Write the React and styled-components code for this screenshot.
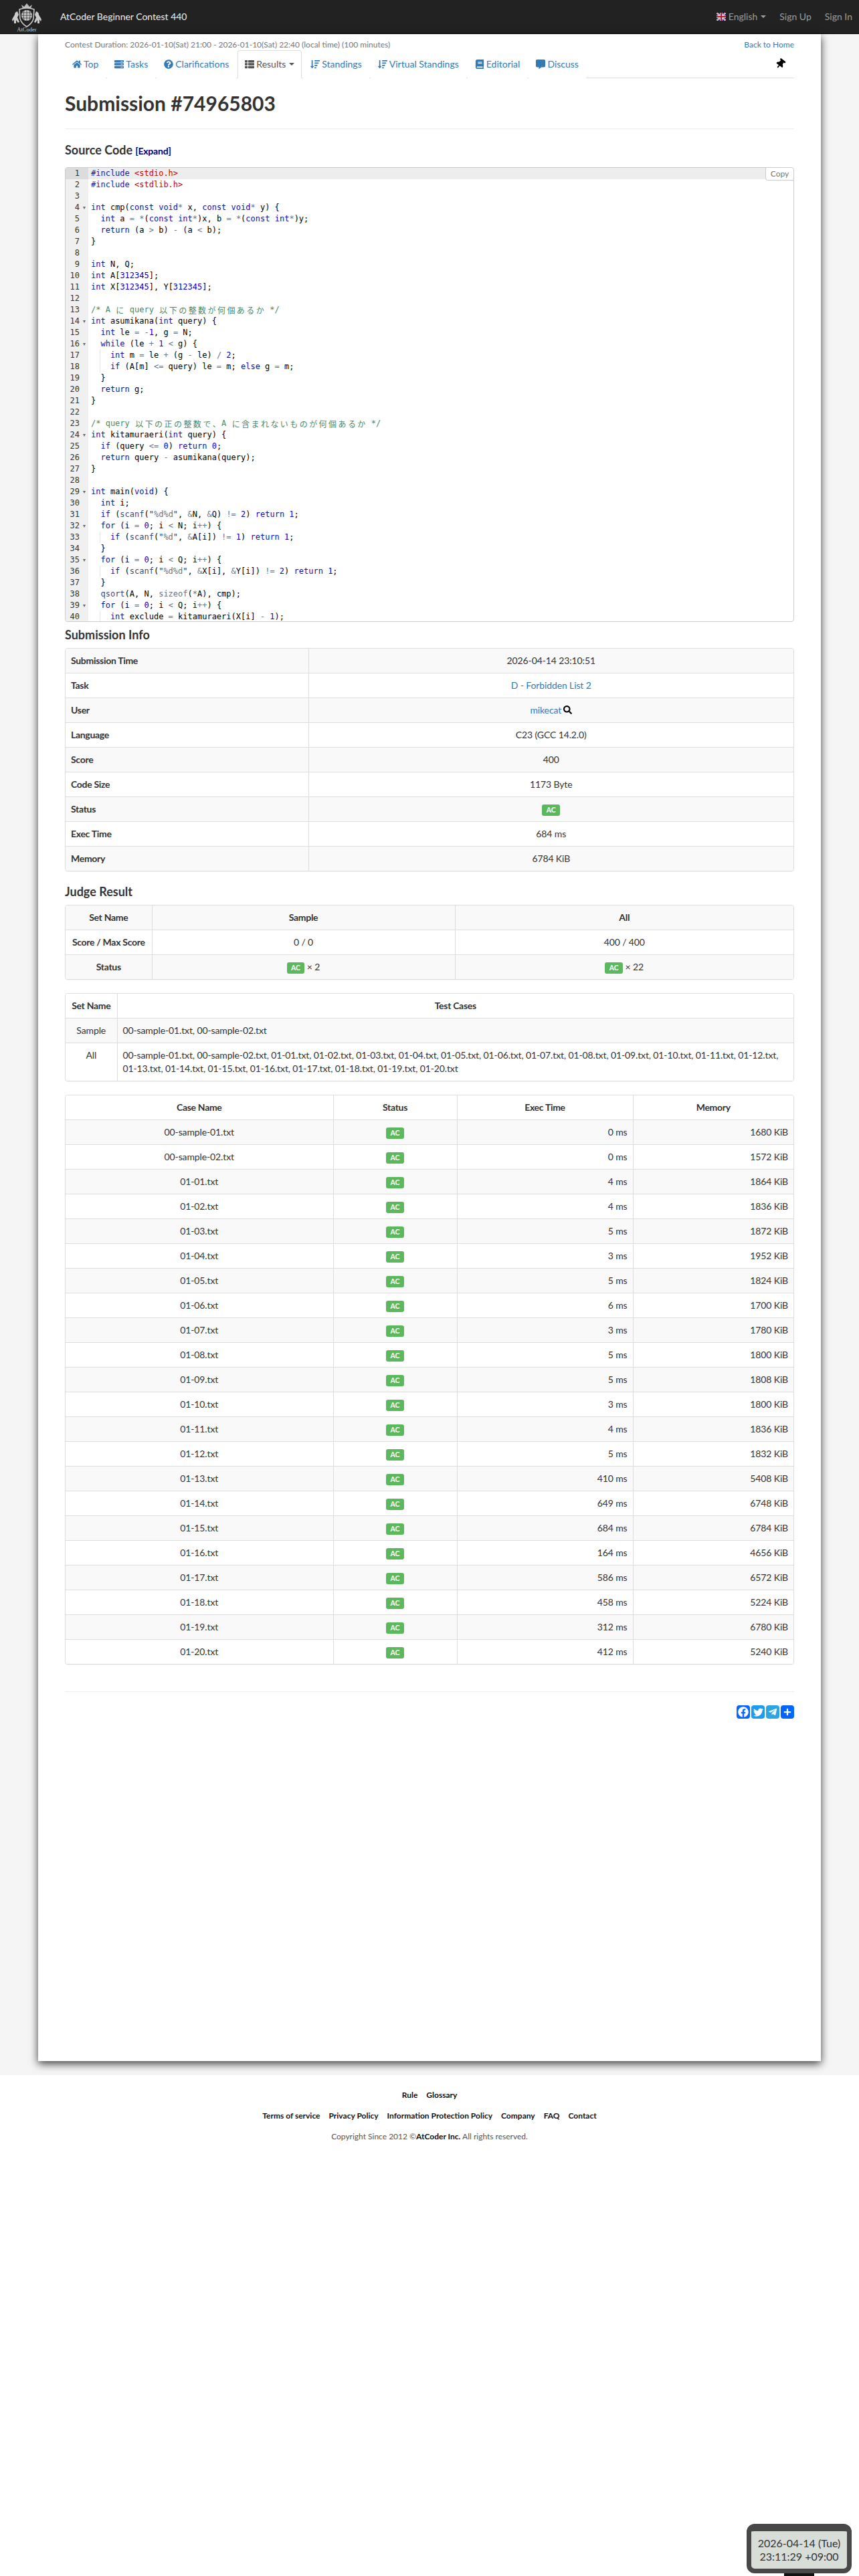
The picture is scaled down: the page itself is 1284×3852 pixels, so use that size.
import React from 'react';
import styled, { createGlobalStyle } from 'styled-components';
import {
    FaHome, FaServer, FaQuestionCircle, FaThList, FaSortAmountDown, FaBook, FaCommentAlt,
    FaThumbtack, FaSearch, FaFacebook, FaTwitter, FaTelegramPlane, FaPlus,
} from 'react-icons/fa';

const GlobalStyle = createGlobalStyle`
    html, body {
        margin: 0;
        padding: 0;
        background: #fff;
    }
    body {
        font-family: Lato, "Liberation Sans", sans-serif;
        font-size: 14px;
        line-height: 20px;
        color: #333;
    }
`;

const Page = styled.div`
    width: 1284px;
    height: 3852px;
    overflow: hidden;
`;

/* ---------- navbar ---------- */
const Navbar = styled.nav`
    height: 50px;
    background: #222;
    border-bottom: 1px solid #080808;
    display: flex;
    align-items: center;
    padding: 0 10px 0 15px;
`;
const Brand = styled.div`
    display: flex;
    align-items: center;
    color: #eee;
    gap: 25px;
    flex: 1;
`;
const NavLinks = styled.div`
    display: flex;
    align-items: center;
    color: #9d9d9d;
`;
const NavLink = styled.span`
    margin-left: ${p => p.$gap}px;
    display: flex;
    align-items: center;
`;
const Caret = styled.i`
    display: inline-block;
    width: 0;
    height: 0;
    margin-left: ${p => p.$gap || 2}px;
    border-top: 4px solid currentColor;
    border-left: 4px solid transparent;
    border-right: 4px solid transparent;
`;
const Flag = styled.svg`
    width: 14px;
    height: 12px;
    margin-right: 4px;
`;

/* ---------- main container ---------- */
const Wrap = styled.div`
    background: #f5f5f5;
    padding-bottom: 21px;
`;
const Main = styled.main`
    box-sizing: border-box;
    width: 1170px;
    height: 3031px;
    margin-left: 57px;
    padding: 7px 40px 0;
    background: #fff;
    box-shadow: 0 4px 12px rgba(0, 0, 0, .75);
`;
const TopRow = styled.div`
    display: flex;
    justify-content: space-between;
    font-size: 12px;
    line-height: 17px;
    color: #777;
`;
const Link = styled.a`
    color: #337ab7;
    text-decoration: none;
`;
const Tabs = styled.ul`
    box-sizing: border-box;
    display: flex;
    align-items: flex-start;
    list-style: none;
    margin: 0;
    padding: 0;
    height: 42px;
    border-bottom: 1px solid #ddd;
`;
const Tab = styled.li`
    box-sizing: border-box;
    height: 42px;
    margin-right: 2px;
    padding: 10px;
    display: flex;
    align-items: center;
    gap: 3px;
    color: ${p => (p.$active ? '#555' : '#337ab7')};
    background: #fff;
    border: 1px solid ${p => (p.$active ? '#ddd' : 'transparent')};
    border-bottom-color: ${p => (p.$active ? '#fff' : 'transparent')};
    border-radius: 4px 4px 0 0;
    svg {
        font-size: 14px;
    }
`;
const PinTab = styled.li`
    margin: 13px 13px 0 auto;
    color: #000;
    font-size: 15px;
    line-height: 15px;
    svg {
        transform: rotate(38deg);
    }
`;
const Title = styled.h2`
    margin: 21px 0;
    font-size: 30px;
    line-height: 33px;
    font-weight: 700;
`;
const Rule = styled.hr`
    margin: ${p => p.$top || 0}px 0 0;
    border: 0;
    border-top: 1px solid #eee;
`;
const Heading = styled.h3`
    margin: ${p => p.$top}px 0 10px;
    font-size: 18px;
    line-height: 20px;
    font-weight: 700;
`;
const Expand = styled.a`
    margin-left: 4px;
    font-size: 14px;
    letter-spacing: -.2px;
    color: #000080;
`;

/* ---------- editor ---------- */
const Editor = styled.div`
    position: relative;
    box-sizing: border-box;
    height: 680px;
    margin-top: 14px;
    display: flex;
    overflow: hidden;
    border: 1px solid #ccc;
    border-radius: 4px;
    font-family: "DejaVu Sans Mono", "Liberation Mono", monospace;
    font-size: 12px;
    line-height: 17px;
`;
const CopyButton = styled.span`
    position: absolute;
    top: -1px;
    right: -1px;
    width: 41px;
    height: 18px;
    text-align: center;
    background: #fff;
    border: 1px solid #ccc;
    border-radius: 0 4px 0 4px;
    font-family: Lato, sans-serif;
    font-size: 12px;
    line-height: 18px;
    color: #777;
`;
const Gutter = styled.div`
    width: 34px;
    flex: none;
    background: #f0f0f0;
    color: #333;
`;
const GutterCell = styled.div`
    position: relative;
    height: 17px;
    box-sizing: border-box;
    padding-right: 13px;
    text-align: right;
    background: ${p => (p.$active ? '#dcdcdc' : 'transparent')};
`;
const Fold = styled.i`
    position: absolute;
    right: 4px;
    top: 7px;
    width: 0;
    height: 0;
    border-top: 4px solid #666;
    border-left: 2.5px solid transparent;
    border-right: 2.5px solid transparent;
`;
const CodeArea = styled.div`
    flex: 1;
    min-width: 0;
`;
const CodeLine = styled.div`
    height: 17px;
    padding-left: 4px;
    white-space: pre;
    color: #000;
    background: ${p => (p.$active ? 'rgba(0, 0, 0, .07)' : 'transparent')};
`;
const Guide = styled.span`
    display: inline-block;
    width: 14.45px;
    height: 17px;
    vertical-align: top;
    box-shadow: ${p => (p.$line ? 'inset -1px 0 0 #e4e4e4' : 'none')};
`;
const tokenColors = {
    kw: '#1010b0',
    num: '#0000cd',
    op: '#687687',
    str: '#1a1aa6',
    fn: '#3c4c72',
    inc: '#c5060b',
    com: '#4c886b',
    fmt: '#687687',
};
const Tok = styled.span`
    color: ${p => tokenColors[p.$kind]};
`;
const Wide = styled.span`
    display: inline-block;
    width: 14.45px;
    text-align: center;
    font-family: "Noto Sans CJK JP", sans-serif;
    line-height: 17px;
    vertical-align: top;
`;

/* ---------- tables ---------- */
const Panel = styled.div`
    margin-top: ${p => p.$top || 0}px;
    border: 1px solid #ddd;
    border-radius: 4px;
    box-shadow: 0 1px 1px rgba(0, 0, 0, .05);
    overflow: hidden;
`;
const Table = styled.table`
    width: 100%;
    table-layout: fixed;
    border-collapse: collapse;
    tbody tr:nth-child(odd) {
        background: ${p => (p.$evenStripe ? '#fff' : '#f9f9f9')};
    }
    tbody tr:nth-child(even) {
        background: ${p => (p.$evenStripe ? '#f9f9f9' : '#fff')};
    }
`;
const Cell = styled.td`
    padding: 8px;
    border: 1px solid #ddd;
    line-height: 20px;
    letter-spacing: ${p => (p.$head ? '-.3px' : '-.12px')};
    white-space: ${p => (p.$head ? 'nowrap' : 'normal')};
    text-align: ${p => p.$align || 'center'};
    font-weight: ${p => (p.$head ? 700 : 400)};
    vertical-align: top;
    tr:first-child > & {
        border-top: 0;
    }
    tr:last-child > & {
        border-bottom: 0;
    }
    &:first-child {
        border-left: 0;
    }
    &:last-child {
        border-right: 0;
    }
`;
const CaseName = styled.span`
    white-space: nowrap;
`;
const Badge = styled.span`
    padding: .2em .6em .3em;
    background: #5cb85c;
    border-radius: 3px;
    color: #fff;
    font-size: 10.5px;
    line-height: 1;
    font-weight: 700;
    letter-spacing: 0;
`;
const SearchIcon = styled(FaSearch)`
    color: #000;
    font-size: 13px;
    margin-left: 3px;
    vertical-align: -1px;
`;

/* ---------- share / footer ---------- */
const ShareRow = styled.div`
    display: flex;
    justify-content: flex-end;
    gap: 2px;
    margin-top: 20px;
`;
const ShareButton = styled.span`
    width: 20px;
    height: 20px;
    border-radius: 4px;
    background: ${p => p.$color};
    color: #fff;
    display: flex;
    align-items: center;
    justify-content: center;
    font-size: ${p => p.$size || 14}px;
`;
const Footer = styled.footer`
    padding-top: 21px;
    background: #fff;
    text-align: center;
    font-size: 12px;
    line-height: 17px;
`;
const FooterRow = styled.div`
    display: flex;
    justify-content: center;
    gap: 13px;
    margin-bottom: 14px;
    font-weight: 700;
    color: #111;
`;
const Copyright = styled.div`
    color: #555;
    b {
        color: #111;
    }
`;

/* ---------- clock ---------- */
const Clock = styled.div`
    position: fixed;
    left: 1116px;
    top: 3774px;
    box-sizing: border-box;
    width: 157px;
    height: 74px;
    padding: 8px 0 0;
    background: #d8ddd8;
    border: 7px solid #484848;
    border-top-width: 11px;
    border-radius: 12px;
    text-align: center;
    font-size: 16px;
    line-height: 20px;
    color: #333;
`;
const ClockStand = styled.div`
    position: fixed;
    left: 1172px;
    top: 3848px;
    width: 45px;
    height: 4px;
    background: #111;
`;

const codeLines = [
    '#include <stdio.h>',
    '#include <stdlib.h>',
    '',
    'int cmp(const void* x, const void* y) {',
    '  int a = *(const int*)x, b = *(const int*)y;',
    '  return (a > b) - (a < b);',
    '}',
    '',
    'int N, Q;',
    'int A[312345];',
    'int X[312345], Y[312345];',
    '',
    '/* A に query 以下の整数が何個あるか */',
    'int asumikana(int query) {',
    '  int le = -1, g = N;',
    '  while (le + 1 < g) {',
    '    int m = le + (g - le) / 2;',
    '    if (A[m] <= query) le = m; else g = m;',
    '  }',
    '  return g;',
    '}',
    '',
    '/* query 以下の正の整数で、A に含まれないものが何個あるか */',
    'int kitamuraeri(int query) {',
    '  if (query <= 0) return 0;',
    '  return query - asumikana(query);',
    '}',
    '',
    'int main(void) {',
    '  int i;',
    '  if (scanf("%d%d", &N, &Q) != 2) return 1;',
    '  for (i = 0; i < N; i++) {',
    '    if (scanf("%d", &A[i]) != 1) return 1;',
    '  }',
    '  for (i = 0; i < Q; i++) {',
    '    if (scanf("%d%d", &X[i], &Y[i]) != 2) return 1;',
    '  }',
    '  qsort(A, N, sizeof(*A), cmp);',
    '  for (i = 0; i < Q; i++) {',
    '    int exclude = kitamuraeri(X[i] - 1);',
];
const foldLines = [4, 14, 16, 24, 29, 32, 35, 39];

const wideSplit = text => text.split(/([\u3000-\u9fff])/).map((part, i) => (
    i % 2 ? <Wide key={i}>{part}</Wide> : part
));

// 아주 단순한 C 구문 강조
const highlight = line => {
    if (line.startsWith('/*')) return <Tok $kind="com">{wideSplit(line)}</Tok>;
    if (line.startsWith('#include')) {
        const [kw, inc] = line.split(' ');
        return <><Tok $kind="str">{kw}</Tok> <Tok $kind="inc">{inc}</Tok></>;
    }
    const pattern = /("[^"]*")|\b(int|void|const|return|if|else|while|for)\b|\b(scanf|qsort)\b|\b(sizeof)\b|\b(\d+)\b|([-+*/<>=!&]+)/g;
    const out = [];
    let last = 0;
    let m;
    while ((m = pattern.exec(line))) {
        if (m.index > last) out.push(line.slice(last, m.index));
        const key = m.index;
        if (m[1]) {
            out.push(<Tok key={key} $kind="str">"<Tok $kind="fmt">{m[1].slice(1, -1)}</Tok>"</Tok>);
        } else if (m[2]) {
            out.push(<Tok key={key} $kind="kw">{m[2]}</Tok>);
        } else if (m[3]) {
            out.push(<Tok key={key} $kind="fn">{m[3]}</Tok>);
        } else if (m[4]) {
            out.push(<Tok key={key} $kind="op">{m[4]}</Tok>);
        } else if (m[5]) {
            out.push(<Tok key={key} $kind="num">{m[5]}</Tok>);
        } else {
            out.push(<Tok key={key} $kind="op">{m[6]}</Tok>);
        }
        last = m.index + m[0].length;
    }
    if (last < line.length) out.push(line.slice(last));
    return out;
};

const renderLine = line => {
    const deep = line.startsWith('    ');
    const body = deep ? line.slice(4) : line;
    return (
        <>
            {deep && <><Guide $line /><Guide /></>}
            {highlight(body)}
        </>
    );
};

const infoRows = [
    ['Submission Time', '2026-04-14 23:10:51'],
    ['Task', <Link key="t">D - Forbidden List 2</Link>],
    ['User', <span key="u"><Link>mikecat</Link><SearchIcon /></span>],
    ['Language', 'C23 (GCC 14.2.0)'],
    ['Score', '400'],
    ['Code Size', '1173 Byte'],
    ['Status', <Badge key="b">AC</Badge>],
    ['Exec Time', '684 ms'],
    ['Memory', '6784 KiB'],
];

const cases = [
    ['00-sample-01.txt', 0, 1680], ['00-sample-02.txt', 0, 1572],
    ['01-01.txt', 4, 1864], ['01-02.txt', 4, 1836], ['01-03.txt', 5, 1872], ['01-04.txt', 3, 1952],
    ['01-05.txt', 5, 1824], ['01-06.txt', 6, 1700], ['01-07.txt', 3, 1780], ['01-08.txt', 5, 1800],
    ['01-09.txt', 5, 1808], ['01-10.txt', 3, 1800], ['01-11.txt', 4, 1836], ['01-12.txt', 5, 1832],
    ['01-13.txt', 410, 5408], ['01-14.txt', 649, 6748], ['01-15.txt', 684, 6784], ['01-16.txt', 164, 4656],
    ['01-17.txt', 586, 6572], ['01-18.txt', 458, 5224], ['01-19.txt', 312, 6780], ['01-20.txt', 412, 5240],
];

const CaseList = ({ items }) => items.map((v, i) => (
    <React.Fragment key={v[0]}>
        <CaseName>{v[0]}{i < items.length - 1 ? ',' : ''}</CaseName>{' '}
    </React.Fragment>
));

const Logo = () => (
    <svg width="50" height="46" viewBox="0 0 50 46">
        {/* crown */}
        <path d="M19 11 L17 5 L21 8 L25 3 L29 8 L33 5 L31 11 Z" fill="#bbb" />
        {/* shield */}
        <path d="M14 12 Q25 8 36 12 L35 26 Q33 33 25 38 Q17 33 15 26 Z" fill="#222" stroke="#ccc" strokeWidth="1.5" />
        {/* globe */}
        <circle cx="25" cy="21" r="8" fill="#ccc" />
        <path d="M17 21H33M18 17H32M18 25H32M25 13V29M21 14Q19 21 21 28M29 14Q31 21 29 28" stroke="#222" strokeWidth=".7" fill="none" />
        {/* horses */}
        <path d="M11 15 Q7 16 7 20 L3 27 L4 30 L6 27 L6 33 L9 33 L9 28 L12 32 L14 31 L11 24 L13 20 Z" fill="#ccc" />
        <path d="M39 15 Q43 16 43 20 L47 27 L46 30 L44 27 L44 33 L41 33 L41 28 L38 32 L36 31 L39 24 L37 20 Z" fill="#ccc" />
        <text x="25" y="45" textAnchor="middle" fontFamily="'Liberation Serif', serif" fontSize="8.5" fill="#ccc">AtCoder</text>
    </svg>
);

const App = () => {
    return (
        <Page>
            <GlobalStyle />
            <Navbar>
                <Brand>
                    <Logo />
                    <span>AtCoder Beginner Contest 440</span>
                </Brand>
                <NavLinks>
                    <NavLink $gap={0}>
                        <Flag viewBox="0 0 14 12">
                            <rect width="14" height="12" fill="#012169" />
                            <path d="M0 0L14 12M14 0L0 12" stroke="#fff" strokeWidth="2.4" />
                            <path d="M0 0L14 12M14 0L0 12" stroke="#c8102e" strokeWidth=".8" />
                            <path d="M7 0V12M0 6H14" stroke="#fff" strokeWidth="3.6" />
                            <path d="M7 0V12M0 6H14" stroke="#c8102e" strokeWidth="2" />
                        </Flag>
                        English<Caret $gap={5} />
                    </NavLink>
                    <NavLink $gap={20}>Sign Up</NavLink>
                    <NavLink $gap={20}>Sign In</NavLink>
                </NavLinks>
            </Navbar>
            <Wrap>
                <Main>
                    <TopRow>
                        <span>Contest Duration: 2026-01-10(Sat) 21:00 - 2026-01-10(Sat) 22:40 (local time) (100 minutes)</span>
                        <Link>Back to Home</Link>
                    </TopRow>
                    <Tabs>
                        <Tab><FaHome />Top</Tab>
                        <Tab><FaServer />Tasks</Tab>
                        <Tab><FaQuestionCircle />Clarifications</Tab>
                        <Tab $active><FaThList />Results<Caret /></Tab>
                        <Tab><FaSortAmountDown />Standings</Tab>
                        <Tab><FaSortAmountDown />Virtual Standings</Tab>
                        <Tab><FaBook />Editorial</Tab>
                        <Tab><FaCommentAlt />Discuss</Tab>
                        <PinTab><FaThumbtack /></PinTab>
                    </Tabs>
                    <Title>Submission #74965803</Title>
                    <Rule />
                    <Heading $top={21}>Source Code<Expand>[Expand]</Expand></Heading>
                    <Editor>
                        <CopyButton>Copy</CopyButton>
                        <Gutter>
                            {codeLines.map((v, i) => (
                                <GutterCell key={i} $active={i === 0}>
                                    {i + 1}
                                    {foldLines.includes(i + 1) && <Fold />}
                                </GutterCell>
                            ))}
                        </Gutter>
                        <CodeArea>
                            {codeLines.map((v, i) => (
                                <CodeLine key={i} $active={i === 0}>{renderLine(v)}</CodeLine>
                            ))}
                        </CodeArea>
                    </Editor>
                    <Heading $top={9}>Submission Info</Heading>
                    <Panel>
                        <Table>
                            <colgroup>
                                <col width="363" />
                                <col />
                            </colgroup>
                            <tbody>
                                {infoRows.map((v, i) => (
                                    <tr key={i}>
                                        <Cell $head $align="left">{v[0]}</Cell>
                                        <Cell>{v[1]}</Cell>
                                    </tr>
                                ))}
                            </tbody>
                        </Table>
                    </Panel>
                    <Heading $top={20}>Judge Result</Heading>
                    <Panel>
                        <Table>
                            <colgroup>
                                <col width="129" />
                                <col width="453" />
                                <col />
                            </colgroup>
                            <tbody>
                                <tr>
                                    <Cell $head>Set Name</Cell>
                                    <Cell $head>Sample</Cell>
                                    <Cell $head>All</Cell>
                                </tr>
                                <tr>
                                    <Cell $head>Score / Max Score</Cell>
                                    <Cell>0 / 0</Cell>
                                    <Cell>400 / 400</Cell>
                                </tr>
                                <tr>
                                    <Cell $head>Status</Cell>
                                    <Cell><Badge>AC</Badge> × 2</Cell>
                                    <Cell><Badge>AC</Badge> × 22</Cell>
                                </tr>
                            </tbody>
                        </Table>
                    </Panel>
                    <Panel $top={20}>
                        <Table $evenStripe>
                            <colgroup>
                                <col width="77" />
                                <col />
                            </colgroup>
                            <tbody>
                                <tr>
                                    <Cell $head>Set Name</Cell>
                                    <Cell $head>Test Cases</Cell>
                                </tr>
                                <tr>
                                    <Cell>Sample</Cell>
                                    <Cell $align="left"><CaseList items={cases.slice(0, 2)} /></Cell>
                                </tr>
                                <tr>
                                    <Cell>All</Cell>
                                    <Cell $align="left"><CaseList items={cases} /></Cell>
                                </tr>
                            </tbody>
                        </Table>
                    </Panel>
                    <Panel $top={20}>
                        <Table $evenStripe>
                            <colgroup>
                                <col width="400" />
                                <col width="185" />
                                <col width="263" />
                                <col />
                            </colgroup>
                            <tbody>
                                <tr>
                                    <Cell $head>Case Name</Cell>
                                    <Cell $head>Status</Cell>
                                    <Cell $head>Exec Time</Cell>
                                    <Cell $head>Memory</Cell>
                                </tr>
                                {cases.map(v => (
                                    <tr key={v[0]}>
                                        <Cell>{v[0]}</Cell>
                                        <Cell><Badge>AC</Badge></Cell>
                                        <Cell $align="right">{v[1]} ms</Cell>
                                        <Cell $align="right">{v[2]} KiB</Cell>
                                    </tr>
                                ))}
                            </tbody>
                        </Table>
                    </Panel>
                    <Rule $top={40} />
                    <ShareRow>
                        <ShareButton $color="#0866ff" $size={16}><FaFacebook /></ShareButton>
                        <ShareButton $color="#1d9bf0" $size={15}><FaTwitter /></ShareButton>
                        <ShareButton $color="#2ca5e0"><FaTelegramPlane /></ShareButton>
                        <ShareButton $color="#0166ff" $size={12}><FaPlus /></ShareButton>
                    </ShareRow>
                </Main>
            </Wrap>
            <Footer>
                <FooterRow><span>Rule</span><span>Glossary</span></FooterRow>
                <FooterRow>
                    <span>Terms of service</span>
                    <span>Privacy Policy</span>
                    <span>Information Protection Policy</span>
                    <span>Company</span>
                    <span>FAQ</span>
                    <span>Contact</span>
                </FooterRow>
                <Copyright>Copyright Since 2012 ©<b>AtCoder Inc.</b> All rights reserved.</Copyright>
            </Footer>
            <Clock>2026-04-14 (Tue)<br />23:11:29 +09:00</Clock>
            <ClockStand />
        </Page>
    );
};

export default App;
